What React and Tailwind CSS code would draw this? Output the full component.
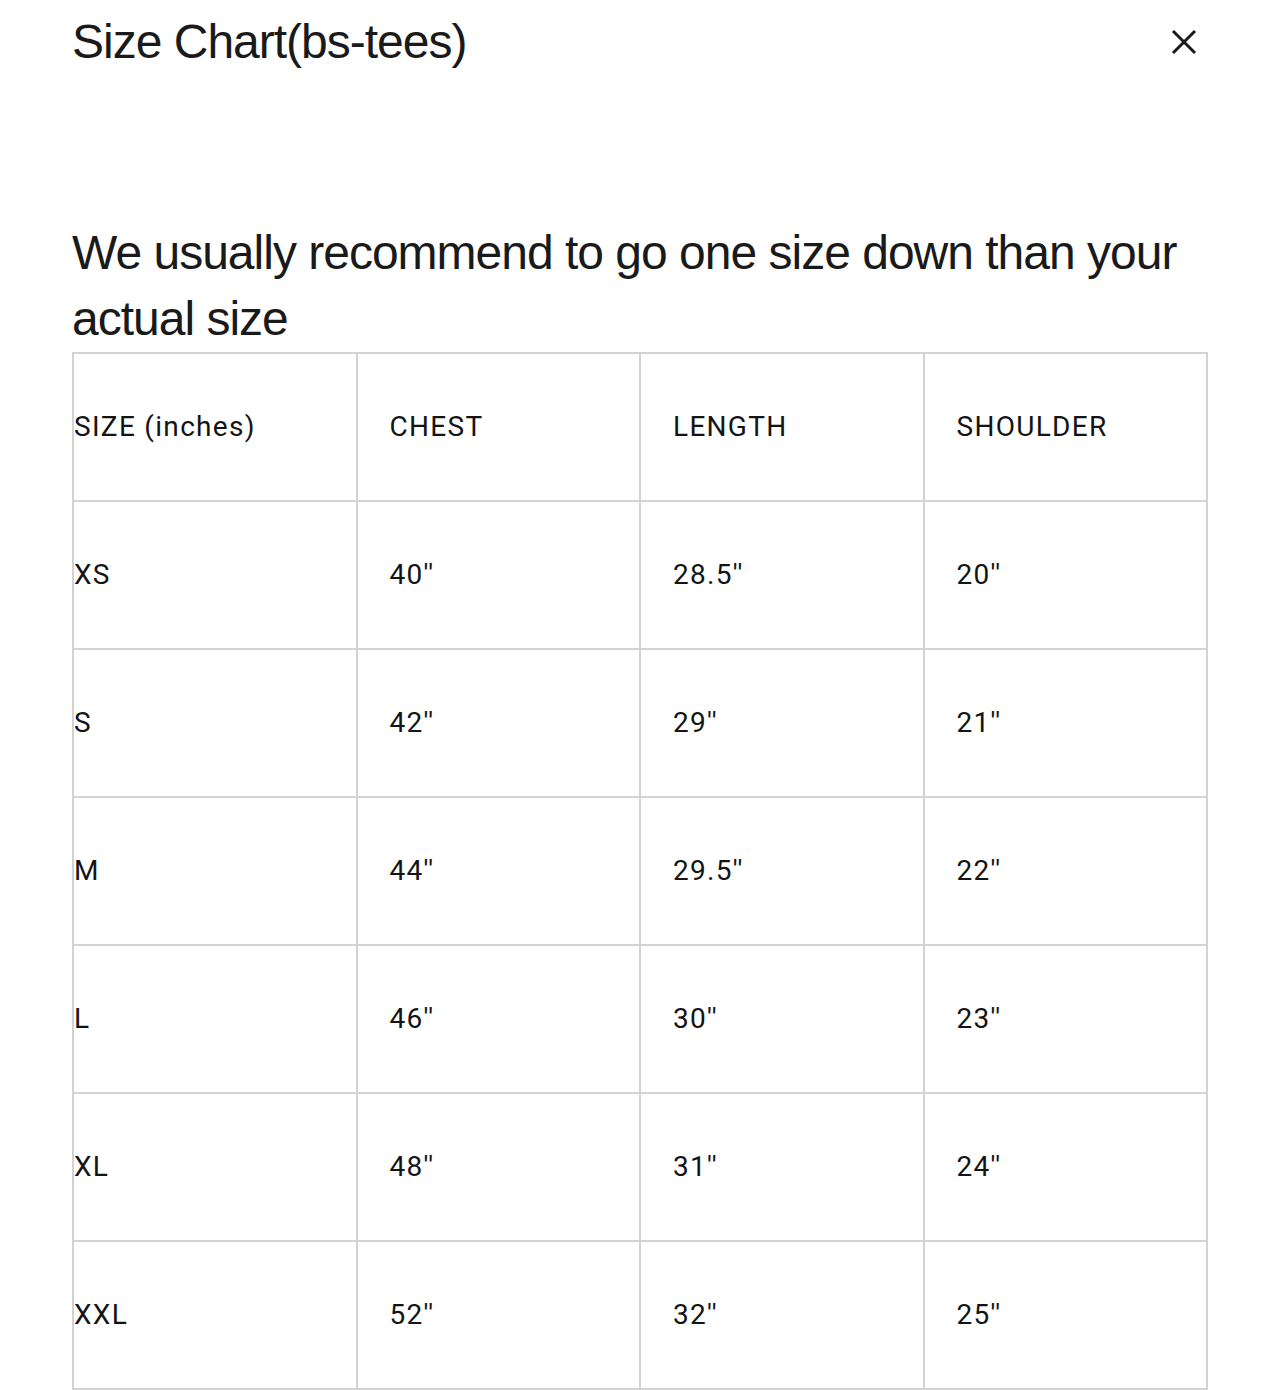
import React from "react";

const rows = [
  ["XS", "40''", "28.5''", "20''"],
  ["S", "42''", "29''", "21''"],
  ["M", "44''", "29.5''", "22''"],
  ["L", "46''", "30''", "23''"],
  ["XL", "48''", "31''", "24''"],
  ["XXL", "52''", "32''", "25''"],
];

function Cell({ children, first }) {
  return (
    <td
      className={
        "border-2 border-[#d2d2d2] h-[148px] align-middle text-[28px] tracking-[1.3px] text-[#141414] " +
        (first ? "pl-0" : "pl-[32px]")
      }
      style={{ fontFamily: "Roboto, 'Noto Sans', sans-serif" }}
    >
      {children}
    </td>
  );
}

export default function App() {
  return (
    <div className="bg-white min-h-[1390px] w-[1268px] overflow-hidden">
      <div className="ml-[72px] w-[1136px]">
        <div className="flex items-start justify-between pt-[14px]">
          <h1
            className="text-[48px] leading-[56px] tracking-[-1px] text-[#1a1a1a]"
            style={{ fontFamily: "'Liberation Sans', Arial, sans-serif" }}
          >
            Size Chart(bs-tees)
          </h1>
          <button className="mr-[10px] mt-[14px] w-[28px] h-[28px] flex items-center justify-center">
            <svg width="26" height="26" viewBox="0 0 26 26">
              <path d="M2 2 L24 24 M24 2 L2 24" stroke="#1a1a1a" strokeWidth="3" />
            </svg>
          </button>
        </div>
        <p
          className="mt-[150px] text-[48px] leading-[66px] tracking-[-1px] text-[#1a1a1a] pr-[20px]"
          style={{ fontFamily: "'Liberation Sans', Arial, sans-serif" }}
        >
          We usually recommend to go one size down than your actual size
        </p>
        <table className="border-collapse w-[1136px] table-fixed">
          <tbody>
            <tr>
              <Cell first>SIZE (inches)</Cell>
              <Cell>CHEST</Cell>
              <Cell>LENGTH</Cell>
              <Cell>SHOULDER</Cell>
            </tr>
            {rows.map((r) => (
              <tr key={r[0]}>
                {r.map((c, i) => (
                  <Cell key={i} first={i === 0}>
                    {c}
                  </Cell>
                ))}
              </tr>
            ))}
          </tbody>
        </table>
      </div>
    </div>
  );
}
